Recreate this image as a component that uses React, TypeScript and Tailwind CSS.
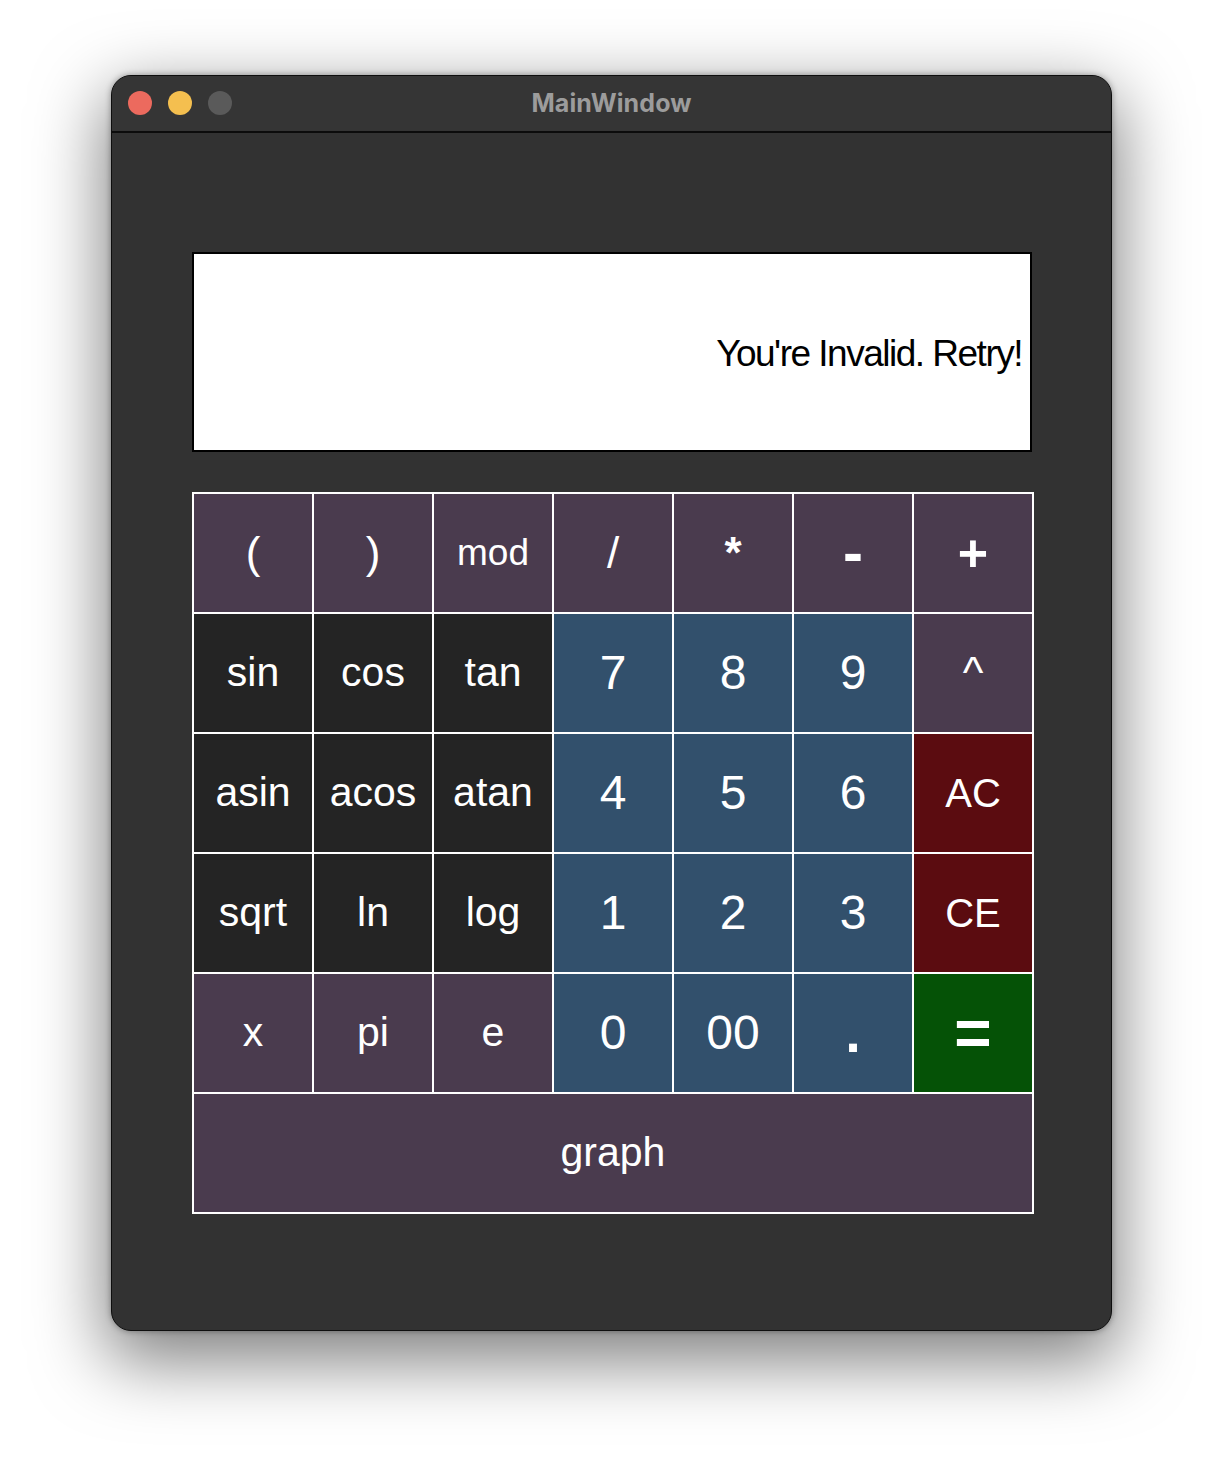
import React from "react";

type Btn = { label: string; bg: string; cls: string };

const P = "bg-[#4a3b4e]";
const D = "bg-[#242424]";
const B = "bg-[#32506c]";
const R = "bg-[#5b0c10]";
const G = "bg-[#055206]";

const fn = "text-[41px]";
const dg = "text-[48px]";

const rows: Btn[][] = [
  [
    { label: "(", bg: P, cls: "text-[44px]" },
    { label: ")", bg: P, cls: "text-[44px]" },
    { label: "mod", bg: P, cls: "text-[37px]" },
    { label: "/", bg: P, cls: "text-[44px]" },
    { label: "*", bg: P, cls: "text-[44px] font-bold" },
    { label: "-", bg: P, cls: "text-[60px] font-bold" },
    { label: "+", bg: P, cls: "text-[52px] font-bold" },
  ],
  [
    { label: "sin", bg: D, cls: fn },
    { label: "cos", bg: D, cls: fn },
    { label: "tan", bg: D, cls: fn },
    { label: "7", bg: B, cls: dg },
    { label: "8", bg: B, cls: dg },
    { label: "9", bg: B, cls: dg },
    { label: "^", bg: P, cls: "text-[44px]" },
  ],
  [
    { label: "asin", bg: D, cls: fn },
    { label: "acos", bg: D, cls: fn },
    { label: "atan", bg: D, cls: fn },
    { label: "4", bg: B, cls: dg },
    { label: "5", bg: B, cls: dg },
    { label: "6", bg: B, cls: dg },
    { label: "AC", bg: R, cls: "text-[40px]" },
  ],
  [
    { label: "sqrt", bg: D, cls: fn },
    { label: "ln", bg: D, cls: fn },
    { label: "log", bg: D, cls: fn },
    { label: "1", bg: B, cls: dg },
    { label: "2", bg: B, cls: dg },
    { label: "3", bg: B, cls: dg },
    { label: "CE", bg: R, cls: "text-[40px]" },
  ],
  [
    { label: "x", bg: P, cls: fn },
    { label: "pi", bg: P, cls: fn },
    { label: "e", bg: P, cls: fn },
    { label: "0", bg: B, cls: dg },
    { label: "00", bg: B, cls: dg },
    { label: ".", bg: B, cls: "text-[56px] font-bold" },
    { label: "=", bg: G, cls: "text-[64px] font-bold" },
  ],
];

export default function App() {
  return (
    <div className="w-[1224px] h-[1480px] bg-white pt-[75px] pl-[111px]">
      <div className="w-[1001px] h-[1256px] rounded-[20px] bg-[#323232] border border-[#0e0e0e] shadow-[0_24px_70px_6px_rgba(0,0,0,0.5),0_0_6px_rgba(0,0,0,0.35)] overflow-hidden flex flex-col">
        <div className="h-[57px] shrink-0 bg-[#353535] border-b-2 border-[#0c0c0c] relative flex items-center justify-center">
          <div className="absolute left-[16px] top-[15px] flex gap-[16px]">
            <div className="w-[24px] h-[24px] rounded-full bg-[#ec6a5e]" />
            <div className="w-[24px] h-[24px] rounded-full bg-[#f4bf4f]" />
            <div className="w-[24px] h-[24px] rounded-full bg-[#5a5a5a]" />
          </div>
          <span className="text-[25px] font-bold text-[#9c9c9c] font-['Inter',sans-serif] tracking-[0.1px]">MainWindow</span>
        </div>
        <div className="pl-[80px] pt-[119px] font-['Liberation_Sans',Arial,sans-serif]">
          <div className="w-[840px] h-[200px] bg-white border-2 border-black flex items-center justify-end pr-[8px] pt-[4px]">
            <span className="text-[37px] text-black tracking-[-1.5px]">You're Invalid. Retry!</span>
          </div>
          <div className="mt-[40px] w-[842px] bg-white p-[2px] flex flex-col gap-[2px]">
            {rows.map((row, i) => (
              <div key={i} className="flex gap-[2px]">
                {row.map((b, j) => (
                  <div
                    key={j}
                    className={`w-[118px] h-[118px] flex items-center justify-center text-white ${b.bg} ${b.cls}`}
                  >
                    {b.label}
                  </div>
                ))}
              </div>
            ))}
            <div className="h-[118px] flex items-center justify-center text-white bg-[#4a3b4e] text-[41px]">
              graph
            </div>
          </div>
        </div>
      </div>
    </div>
  );
}
